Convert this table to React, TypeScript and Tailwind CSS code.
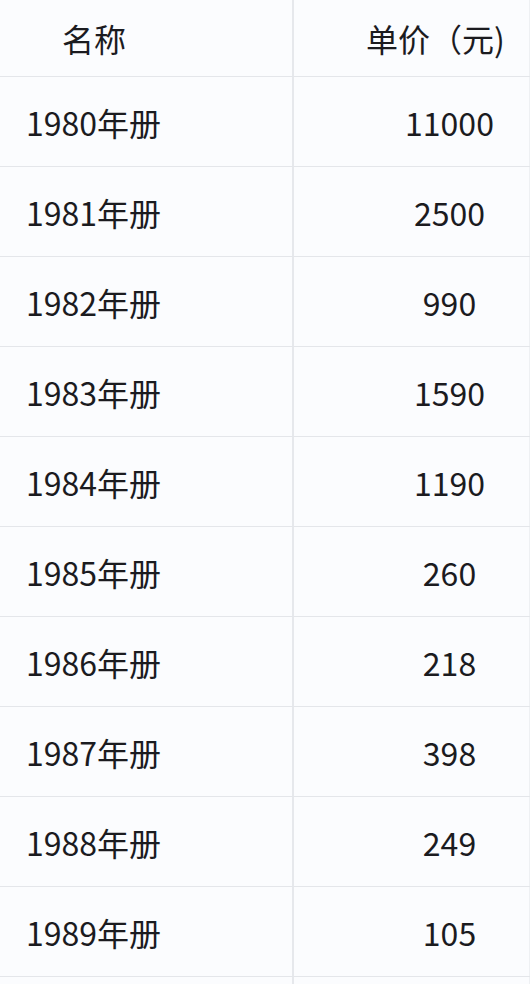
const ROWS = [
  { name: "1980年册", price: "11000" },
  { name: "1981年册", price: "2500" },
  { name: "1982年册", price: "990" },
  { name: "1983年册", price: "1590" },
  { name: "1984年册", price: "1190" },
  { name: "1985年册", price: "260" },
  { name: "1986年册", price: "218" },
  { name: "1987年册", price: "398" },
  { name: "1988年册", price: "249" },
  { name: "1989年册", price: "105" },
  { name: "", price: "" },
];

export default function App() {
  return (
    <div
      className="w-[530px] h-[984px] overflow-hidden bg-[#fbfcfe] text-[#1b1b1f] text-[32px] leading-none"
      style={{ fontFamily: '"Noto Sans CJK SC", "Noto Sans", sans-serif' }}
    >
      {/* 表头 */}
      <div className="grid grid-cols-[294px_1fr] h-[77px] border-b border-[#e4e6ea]">
        <div className="flex items-center pl-[62px] border-r-2 border-[#e6e8ec]">名称</div>
        <div className="flex items-center pl-[72px] border-r border-[#eef0f3]">单价（元)</div>
      </div>

      {ROWS.map((r, i) => (
        <div
          key={i}
          className="grid grid-cols-[294px_1fr] h-[90px] border-b border-[#e4e6ea]"
        >
          <div className="flex items-center pl-[26px] border-r-2 border-[#e6e8ec]">
            {r.name}
          </div>
          <div className="flex items-center justify-center pl-[76px] border-r border-[#eef0f3]">
            {r.price}
          </div>
        </div>
      ))}
    </div>
  );
}
